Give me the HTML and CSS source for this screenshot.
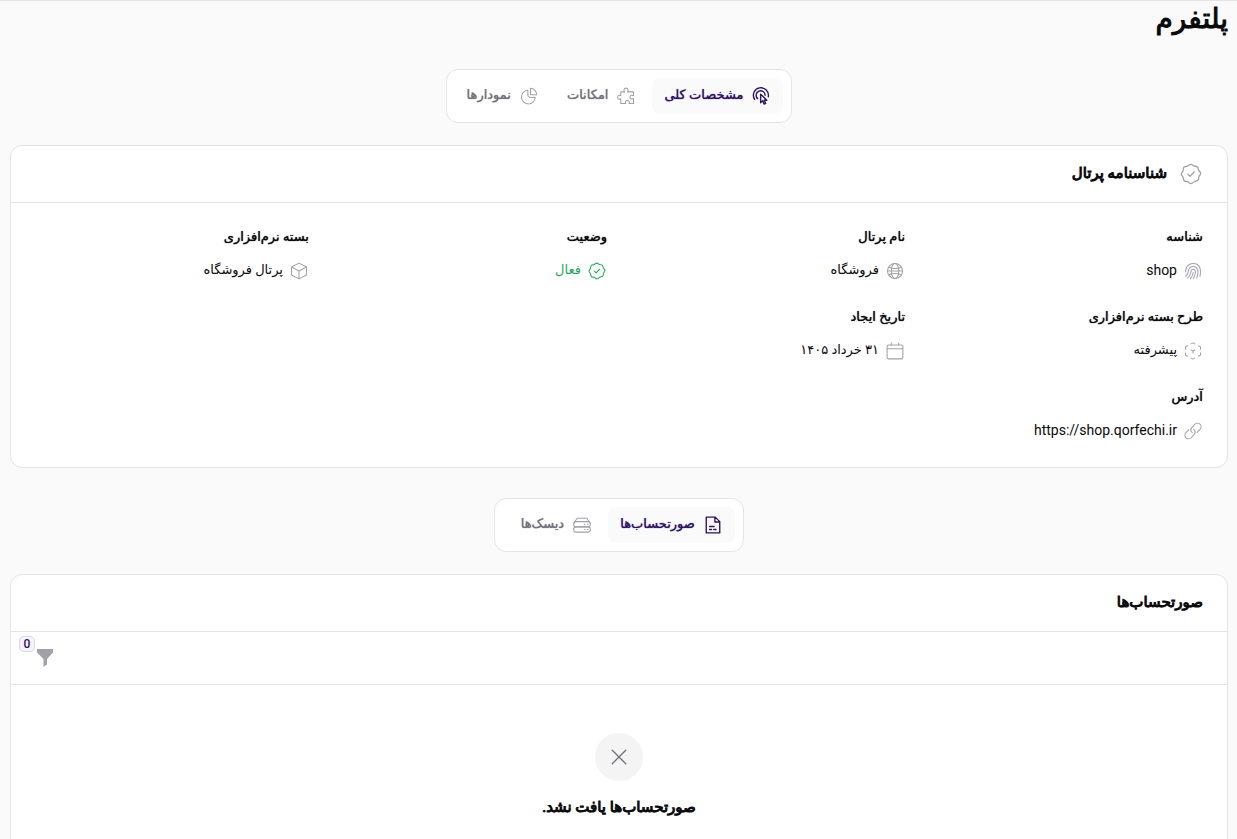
FILE: index.html
```html
<!DOCTYPE html>
<html lang="fa" dir="rtl">
<head>
    <meta charset="UTF-8">
    <meta name="viewport" content="width=device-width, initial-scale=1.0">
    <title>پلتفرم</title>
    <link rel="stylesheet" href="styles.css">
</head>
<body>

<!-- Shared icons -->
<svg class="sprite" aria-hidden="true">
    <symbol id="icon-badge" viewBox="0 0 24 24">
        <path d="M12 1.5c1.600 0 2 1.500 3.300 1.900s2.700-.3 3.800.9.500 2.500 1.300 3.700 2.100 1.700 2.100 3.500-1.400 2.100-1.900 3.400.2 2.900-1 4-2.500.500-3.800 1.300-1.900 2.300-3.800 2.300-2.200-1.500-3.600-2.100-2.700.200-3.900-1-.5-2.600-1.200-3.900S1.500 13.700 1.500 12s1.400-2.200 1.900-3.500-.2-2.900 1-4.100 2.500-.5 3.800-1S10.200 1.500 12 1.500z"/>
        <path d="M8.5 12.3l2.400 2.300 4.600-5"/>
    </symbol>
</svg>

<main class="page">
    <h1 class="page-title">پلتفرم</h1>

    <div class="tabs" role="tablist">
        <button class="tab active" role="tab" aria-selected="true">
            <svg class="icon" viewBox="0 0 24 24"><path d="M3.500 16.500a10 10 0 1 1 18.200-3.500M7.500 15.500a6 6 0 1 1 10-4.500"/><path d="M11.500 9.500v11.500l2.700-2.600 2 4.400 2-1-2-4.100h3.600z"/></svg>
            <span>مشخصات کلی</span>
        </button>
        <button class="tab" role="tab" aria-selected="false">
            <svg class="icon" viewBox="0 0 24 24"><path d="M5 6.500h5.200c-1.800-2.100-1-5 1.800-5s3.600 2.900 1.800 5H22v5.200c-2.100-1.500-4.600-.8-4.600 1.800s2.500 3.300 4.600 1.800V22h-6c1-2.200.2-4-2.200-4s-3.200 1.800-2.200 4H5v-6.300c-2 1.400-4.200.5-4.200-2s2.200-3.400 4.200-2z"/></svg>
            <span>امکانات</span>
        </button>
        <button class="tab" role="tab" aria-selected="false">
            <svg class="icon" viewBox="0 0 24 24"><path d="M10.500 4.200a9.200 9.200 0 1 0 9.800 9.800h-7.300l-2.500-2.500z"/><path d="M14 1.800v8.500h8.300A8.500 8.500 0 0 0 14 1.800z"/></svg>
            <span>نمودارها</span>
        </button>
    </div>

    <!-- Portal details -->
    <section class="card">
        <header class="card-header">
            <svg class="icon"><use href="#icon-badge"/></svg>
            <h2>شناسنامه پرتال</h2>
        </header>
        <dl class="details">
            <div class="detail">
                <dt>شناسه</dt>
                <dd>
                    <svg class="icon" viewBox="0 0 24 24"><path d="M2 13C2 6 6.500 2 12.500 2c6.500 0 9.500 5 9.500 11 0 2-.2 4-.7 6M2 19c2-1.500 3.200-3.500 3.700-6.500.6-4.200 3-6.500 6.800-6.500 5 0 6.500 4.500 6 9.500-.3 2.300-.9 4.300-1.700 6M5 21.500c2.200-2.200 3.800-5 4.300-8.500.3-2.200 1.400-3.300 3-3.300 2.600 0 3.200 2.600 2.800 5.300-.5 2.800-1.500 5.200-2.800 7.200M8.500 22.500c2-2.800 3.200-5.500 3.700-8.500"/></svg>
                    <span class="latin">shop</span>
                </dd>
            </div>
            <div class="detail">
                <dt>نام پرتال</dt>
                <dd>
                    <svg class="icon" viewBox="0 0 24 24"><circle cx="12" cy="12" r="10"/><ellipse cx="12" cy="12" rx="5" ry="10"/><path d="M3.500 7c5 2 12 2 17 0M3.500 17c5-2 12-2 17 0M2 12h20"/></svg>
                    <span>فروشگاه</span>
                </dd>
            </div>
            <div class="detail">
                <dt>وضعیت</dt>
                <dd class="success">
                    <svg class="icon"><use href="#icon-badge"/></svg>
                    <span>فعال</span>
                </dd>
            </div>
            <div class="detail">
                <dt>بسته نرم‌افزاری</dt>
                <dd>
                    <svg class="icon" viewBox="0 0 24 24"><path d="M12 1.500l10 5.200v10.600L12 22.500 2 17.300V6.700zM2 6.700L12 12l10-5.300M12 12v10.500"/></svg>
                    <span>پرتال فروشگاه</span>
                </dd>
            </div>
            <div class="detail">
                <dt>طرح بسته نرم‌افزاری</dt>
                <dd>
                    <svg class="icon" viewBox="0 0 24 24"><path d="M9.500 2.500L12 1.200l2.500 1.300M19.500 5l2.500 1.500v3M22 14.500v3L19.500 19M14.500 21.500L12 22.800l-2.500-1.300M4.500 19L2 17.500v-3M2 9.500v-3L4.500 5M9.500 10.700L12 12l2.500-1.300M12 12v2.500"/></svg>
                    <span>پیشرفته</span>
                </dd>
            </div>
            <div class="detail">
                <dt>تاریخ ایجاد</dt>
                <dd>
                    <svg class="icon" viewBox="0 0 24 24"><rect x="1.500" y="4" width="21" height="18.500" rx="2"/><path d="M1.500 9h21M7 1.500V4M17 1.500V4"/></svg>
                    <span>۳۱ خرداد ۱۴۰۵</span>
                </dd>
            </div>
            <div class="detail full">
                <dt>آدرس</dt>
                <dd>
                    <svg class="icon" viewBox="0 0 24 24"><path d="M11 14.200a5 5 0 0 1-.4-7L14.500 3a4.800 4.800 0 0 1 6.900 6.700l-3.900 4.200"/><path d="M13 9.800a5 5 0 0 1 .4 7L9.500 21a4.800 4.800 0 0 1-6.900-6.700l3.900-4.200"/></svg>
                    <a class="latin" href="https://shop.qorfechi.ir" dir="ltr">https://shop.qorfechi.ir</a>
                </dd>
            </div>
        </dl>
    </section>

    <div class="tabs tabs-second" role="tablist">
        <button class="tab active" role="tab" aria-selected="true">
            <svg class="icon" viewBox="0 0 24 24"><path d="M3 1.500h12l6 6v15H3zM14.500 1.500V8H21M7.500 14h6M7.500 18h2.500M13 18h3"/></svg>
            <span>صورتحساب‌ها</span>
        </button>
        <button class="tab" role="tab" aria-selected="false">
            <svg class="icon" viewBox="0 0 24 24"><path d="M1.500 9l4-6h13l4 6"/><rect x="1" y="7.500" width="22" height="7" rx="3"/><rect x="1" y="14.500" width="22" height="7" rx="3"/><path d="M15 11h1M19 11h1M15 18h1M19 18h1"/></svg>
            <span>دیسک‌ها</span>
        </button>
    </div>

    <!-- Invoices -->
    <section class="card">
        <header class="card-header">
            <h2>صورتحساب‌ها</h2>
        </header>
        <div class="toolbar">
            <button class="filter-btn" aria-label="فیلتر">
                <svg viewBox="0 0 16 18"><path d="M0 0h16v3.500L10 10v5.500L6.500 18v-8L0 3.500z"/></svg>
                <span class="filter-count">0</span>
            </button>
        </div>
        <div class="empty">
            <div class="empty-icon">
                <svg class="icon" viewBox="0 0 24 24"><path d="M3 3l18 18M21 3L3 21"/></svg>
            </div>
            <p>صورتحساب‌ها یافت نشد.</p>
        </div>
    </section>
</main>

</body>
</html>
```
FILE: styles.css
```css
/* General Styles */
* {
    box-sizing: border-box;
}

body {
    font-family: Roboto, 'DejaVu Sans', sans-serif;
    font-size: 13px;
    line-height: 20px;
    color: #09090b;
    background-color: #fafafa;
    margin: 0;
    border-top: 1px solid #e4e4e7;
}

h1, h2, p, dl, dd {
    margin: 0;
}

h1, h2, .empty p {
    font-weight: 400;
    -webkit-text-stroke: 1px currentColor;
}

button {
    font: inherit;
    border: none;
    background: none;
    cursor: pointer;
}

.sprite {
    display: none;
}

.icon {
    width: 18px;
    height: 18px;
    margin: 0 1px;
    flex-shrink: 0;
    fill: none;
    stroke: currentColor;
    stroke-width: 1.4;
    stroke-linecap: round;
    stroke-linejoin: round;
}

.page {
    padding: 0 9px 0 10px;
}

.page-title {
    font-size: 28px;
    line-height: 36px;
    margin-bottom: 32px;
}

/* Tabs */
.tabs {
    display: flex;
    gap: 4px;
    width: fit-content;
    margin: 0 auto 22px;
    padding: 8px;
    background: #fff;
    border: 1px solid #e4e4e7;
    border-radius: 12px;
}

.tabs-second {
    margin-top: 30px;
}

.tab {
    display: flex;
    align-items: center;
    gap: 8px;
    height: 36px;
    padding: 0 12px;
    border-radius: 8px;
    color: #71717a;
}

.tabs-second .tab {
    min-width: 101px;
}

.tab span,
.detail dt {
    text-shadow: 0 0 1px currentColor;
}

.tab span,
.detail dd span,
.detail dd a {
    padding-bottom: 2px;
}

.tab .icon {
    color: #a1a1aa;
}

.tab.active,
.tab.active .icon {
    color: #2e1065;
}

.tab.active {
    background: #fafafa;
}

.tab.active .icon {
    stroke-width: 1.8;
}

/* Cards */
.card {
    background: #fff;
    border: 1px solid #e4e4e7;
    border-radius: 12px;
}

.card-header {
    display: flex;
    align-items: center;
    gap: 12px;
    height: 57px;
    padding: 0 24px;
    border-bottom: 1px solid #e4e4e7;
}

.card-header h2 {
    font-size: 15px;
    line-height: 24px;
    padding-bottom: 2px;
}

.card-header .icon {
    width: 22px;
    height: 22px;
    color: #a1a1aa;
}

/* Details */
.details {
    display: grid;
    grid-template-columns: repeat(4, 1fr);
    gap: 24px;
    padding: 24px;
}

.detail.full {
    grid-column: 1 / -1;
}

.detail dt {
    margin-bottom: 12px;
}

.detail dd {
    display: flex;
    align-items: center;
    gap: 6px;
    height: 24px;
}

.detail .icon {
    color: #a1a1aa;
}

.detail a {
    color: inherit;
    text-decoration: none;
}

.latin {
    font-size: 14px;
}

.detail .success,
.detail .success .icon {
    color: #22a85a;
}

/* Filter */
.toolbar {
    display: flex;
    justify-content: flex-end;
    height: 53px;
    padding: 8px 16px;
    border-bottom: 1px solid #e4e4e7;
}

.filter-btn {
    position: relative;
    display: flex;
    align-items: center;
    justify-content: center;
    width: 36px;
    height: 36px;
    padding: 0;
}

.filter-btn svg {
    width: 16px;
    height: 18px;
    fill: #a1a1aa;
}

.filter-count {
    position: absolute;
    top: -4px;
    left: -8px;
    width: 16px;
    height: 16px;
    font-size: 12px;
    line-height: 14px;
    font-weight: 500;
    color: #2e1065;
    background: #f5f3ff;
    border: 1px solid #ddd6e8;
    border-radius: 5px;
}

/* Empty state */
.empty {
    display: flex;
    flex-direction: column;
    align-items: center;
    gap: 14px;
    padding: 48px 24px;
}

.empty-icon {
    display: flex;
    align-items: center;
    justify-content: center;
    width: 48px;
    height: 48px;
    border-radius: 50%;
    background: #f4f4f5;
    color: #71717a;
}

.empty-icon .icon {
    stroke-width: 1.8;
}

.empty p {
    font-size: 15px;
    line-height: 24px;
}
```
